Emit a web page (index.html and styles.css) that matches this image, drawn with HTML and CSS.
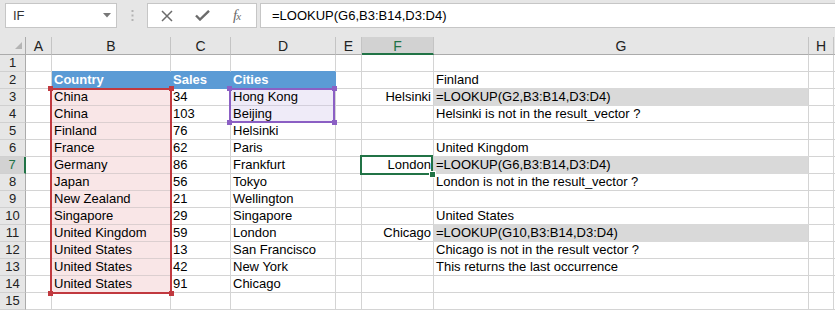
FILE: index.html
```html
<!DOCTYPE html>
<html lang="en">
<head>
    <meta charset="UTF-8">
    <title>LOOKUP result vector</title>
    <link rel="stylesheet" href="styles.css">
</head>
<body>
    <div class="toolbar">
        <div class="namebox">
            <span>IF</span>
            <svg width="8" height="5" viewBox="0 0 8 5"><path d="M0 0H8L4 4.5Z" fill="#777"/></svg>
        </div>
        <div class="grip">
            <svg width="3" height="12" viewBox="0 0 3 12"><rect x="0.5" y="0" width="2" height="2" fill="#b3b3b3"/><rect x="0.5" y="4.5" width="2" height="2" fill="#b3b3b3"/><rect x="0.5" y="9" width="2" height="2" fill="#b3b3b3"/></svg>
        </div>
        <div class="fbtns">
            <svg width="12" height="12" viewBox="0 0 12 12"><path d="M1 1L11 11M11 1L1 11" stroke="#6b6b6b" stroke-width="1.5"/></svg>
            <svg width="15" height="11" viewBox="0 0 15 11"><path d="M1 5.5L5 9.5L14 0.8" stroke="#6b6b6b" stroke-width="2.4" fill="none"/></svg>
            <span class="fx-icon">f<small>x</small></span>
        </div>
        <div class="formula">=LOOKUP(G6,B3:B14,D3:D4)</div>
    </div>

    <div class="sheet">
        <!-- column headers -->
        <div class="corner"><span class="tri"></span></div>
        <div class="ch">A</div><div class="ch">B</div><div class="ch">C</div><div class="ch">D</div><div class="ch">E</div>
        <div class="ch sel">F</div><div class="ch">G</div><div class="ch">H</div><div class="ch"></div>

        <div class="rh">1</div><div></div><div class="above"></div><div class="above"></div><div class="above"></div><div></div><div></div><div></div><div></div><div></div>

        <div class="rh">2</div><div></div><div class="hd">Country</div><div class="hd">Sales</div><div class="hd">Cities</div><div></div><div></div><div>Finland</div><div></div><div></div>

        <div class="rh">3</div><div></div>
        <div class="pk rel">China
            <span class="range red"><i class="tl"></i><i class="tr"></i><i class="bl"></i><i class="br"></i></span>
        </div>
        <div>34</div>
        <div class="pu rel">Hong Kong
            <span class="range purple"><i class="tl"></i><i class="tr"></i><i class="bl"></i><i class="br"></i></span>
        </div>
        <div></div><div class="r">Helsinki</div><div class="gr">=LOOKUP(G2,B3:B14,D3:D4)</div><div></div><div></div>

        <div class="rh">4</div><div></div><div class="pk">China</div><div>103</div><div class="pu">Beijing</div><div></div><div></div><div>Helsinki is not in the result_vector ?</div><div></div><div></div>

        <div class="rh">5</div><div></div><div class="pk">Finland</div><div>76</div><div>Helsinki</div><div></div><div></div><div></div><div></div><div></div>

        <div class="rh">6</div><div></div><div class="pk">France</div><div>62</div><div>Paris</div><div></div><div></div><div>United Kingdom</div><div></div><div></div>

        <div class="rh sel">7</div><div></div><div class="pk">Germany</div><div>86</div><div>Frankfurt</div><div></div>
        <div class="r rel">London<span class="active"><i></i></span></div>
        <div class="gr">=LOOKUP(G6,B3:B14,D3:D4)</div><div></div><div></div>

        <div class="rh">8</div><div></div><div class="pk">Japan</div><div>56</div><div>Tokyo</div><div></div><div></div><div>London is not in the result_vector ?</div><div></div><div></div>

        <div class="rh">9</div><div></div><div class="pk">New Zealand</div><div>21</div><div>Wellington</div><div></div><div></div><div></div><div></div><div></div>

        <div class="rh">10</div><div></div><div class="pk">Singapore</div><div>29</div><div>Singapore</div><div></div><div></div><div>United States</div><div></div><div></div>

        <div class="rh">11</div><div></div><div class="pk">United Kingdom</div><div>59</div><div>London</div><div></div><div class="r">Chicago</div><div class="gr">=LOOKUP(G10,B3:B14,D3:D4)</div><div></div><div></div>

        <div class="rh">12</div><div></div><div class="pk">United States</div><div>13</div><div>San Francisco</div><div></div><div></div><div>Chicago is not in the result vector ?</div><div></div><div></div>

        <div class="rh">13</div><div></div><div class="pk">United States</div><div>42</div><div>New York</div><div></div><div></div><div>This returns the last occurrence</div><div></div><div></div>

        <div class="rh">14</div><div></div><div class="pk">United States</div><div>91</div><div>Chicago</div><div></div><div></div><div></div><div></div><div></div>

        <div class="rh">15</div><div></div><div></div><div></div><div></div><div></div><div></div><div></div><div></div><div></div>
    </div>
</body>
</html>
```

FILE: styles.css
```css
body {
    margin: 0;
    height: 311px;
    font-family: "Liberation Sans", Arial, sans-serif;
    font-size: 13px;
    color: #000;
    background: #fff;
    overflow: hidden;
}

/* formula bar */
.toolbar {
    height: 37px;
    box-sizing: border-box;
    background: #e6e6e6;
    display: flex;
    align-items: flex-start;
    padding: 3px 0 0 5px;
}
.namebox {
    width: 112px;
    height: 25px;
    box-sizing: border-box;
    background: #fff;
    border: 1px solid #c6c6c6;
    display: flex;
    align-items: center;
    justify-content: space-between;
    padding: 0 5px 0 7px;
    color: #333;
}
.grip {
    width: 30px;
    height: 25px;
    display: flex;
    align-items: center;
    justify-content: center;
}
.fbtns {
    width: 110px;
    height: 25px;
    box-sizing: border-box;
    background: #fff;
    border: 1px solid #c6c6c6;
    display: flex;
    align-items: center;
    gap: 22px;
    padding-left: 13px;
}
.fx-icon {
    font-family: "Liberation Serif", serif;
    font-style: italic;
    font-size: 15px;
    color: #6b6b6b;
    letter-spacing: -1px;
    margin-left: 1px;
}
.fx-icon small { font-size: 11px; }
.formula {
    flex: 1;
    margin-left: 3px;
    height: 25px;
    box-sizing: border-box;
    background: #fff;
    border: 1px solid #c6c6c6;
    border-right: none;
    padding-left: 11px;
    line-height: 23px;
}

/* grid */
.sheet {
    display: grid;
    grid-template-columns: 26px 26px 119px 60px 105px 26px 72px 375px 25px 1fr;
    grid-template-rows: 18px;
    grid-auto-rows: 17px;
}
.sheet > div {
    box-sizing: border-box;
    border-right: 1px solid #d4d4d4;
    border-bottom: 1px solid #d4d4d4;
    padding: 0 2px;
    line-height: 16px;
    white-space: nowrap;
}
.rel { position: relative; }
.r { text-align: right; }

.sheet > .corner {
    background: #e6e6e6;
    border-right-color: #ababab;
    border-bottom-color: #ababab;
    position: relative;
}
.tri {
    position: absolute;
    right: 3px;
    bottom: 5px;
    width: 0;
    height: 0;
    border-left: 7px solid transparent;
    border-bottom: 7px solid #b4b4b4;
}
.sheet > .ch {
    background: #e6e6e6;
    border-right-color: #c4c4c4;
    border-bottom-color: #ababab;
    text-align: center;
    font-size: 14px;
    line-height: 18px;
    color: #222;
}
.sheet > .ch.sel {
    background: #d2d2d2;
    border-bottom: 2px solid #217346;
    color: #217346;
}
.sheet > .rh {
    background: #e6e6e6;
    border-right-color: #ababab;
    border-bottom-color: #d0d0d0;
    text-align: center;
    color: #222;
}
.sheet > .rh.sel {
    background: #d2d2d2;
    border-right: 2px solid #217346;
    color: #217346;
}

/* cell fills */
.sheet > .hd {
    background: #5b9bd5;
    border-color: #5b9bd5;
    color: #fff;
    font-weight: bold;
}
.sheet > .above { border-bottom-color: #5b9bd5; }
.sheet > .gr {
    background: #d9d9d9;
    border-bottom-color: #d9d9d9;
    box-shadow: 0 -1px 0 #d9d9d9;
}
.sheet > .pk {
    background: #f9e6e7;
    border-bottom-color: #dccfd0;
}
.sheet > .pu {
    background: #efebf8;
    border-bottom-color: #d3cfdc;
}

/* reference highlights */
.range {
    position: absolute;
    box-sizing: border-box;
    border: 2px solid;
    z-index: 2;
}
.range.red {
    left: -2px;
    top: -1px;
    width: 122px;
    height: 206px;
    border-color: #c1393f;
}
.range.purple {
    left: -2px;
    top: -1px;
    width: 106px;
    height: 35px;
    border-color: #8b5fc4;
}
.range i {
    position: absolute;
    width: 5px;
    height: 5px;
}
.range.red i { background: #c1393f; }
.range.purple i { background: #8b5fc4; }
.range .tl { left: -4px; top: -4px; }
.range .tr { right: -4px; top: -4px; }
.range .bl { left: -4px; bottom: -4px; }
.range .br { right: -4px; bottom: -4px; }

.active {
    position: absolute;
    left: -2px;
    top: -2px;
    width: 73px;
    height: 20px;
    box-sizing: border-box;
    border: 2px solid #217346;
    z-index: 2;
}
.active i {
    position: absolute;
    right: -5px;
    bottom: -5px;
    width: 5px;
    height: 5px;
    background: #217346;
    border: 1px solid #fff;
}
```
